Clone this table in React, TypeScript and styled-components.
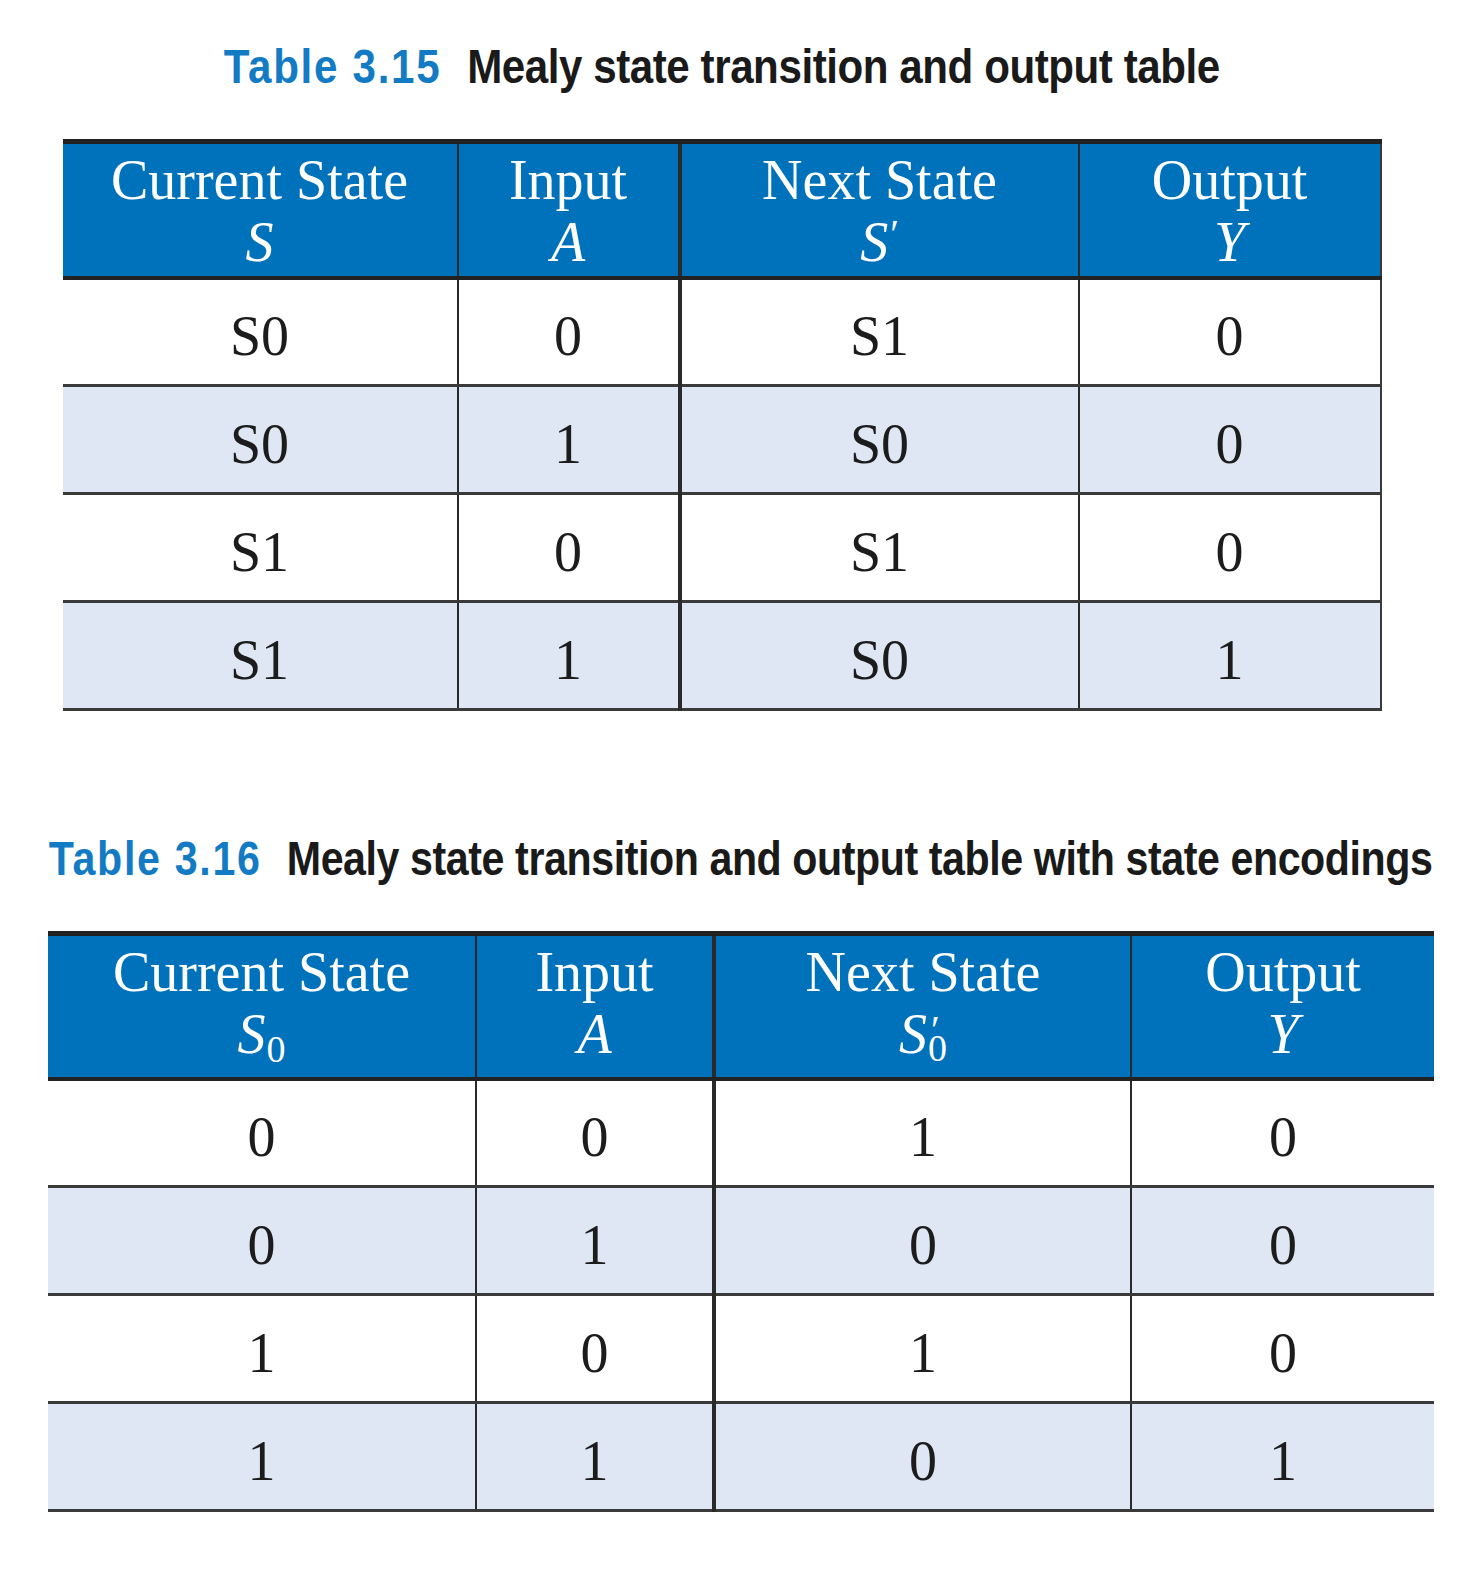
import React from 'react'
import styled, { createGlobalStyle } from 'styled-components'

const GlobalStyle = createGlobalStyle`
    html, body {
        margin: 0;
        padding: 0;
        background: #ffffff;
    }
`

interface TableSpec {
    number: string
    title: string
    offset: number
    squeeze: number
    cols: number[]
    headHeight: number
    rightBorder: boolean
    heads: { label: string; symbol: React.ReactNode }[]
    rows: string[][]
}

const Prime = () => <PrimeMark>′</PrimeMark>

const PrimeSub = () => (
    <Stack>
        <StackTop>′</StackTop>
        <StackBottom>0</StackBottom>
    </Stack>
)

// built inside render so the styled parts below are defined by then
const getTables = (): TableSpec[] => [
    {
        number: 'Table 3.15',
        title: 'Mealy state transition and output table',
        offset: 63,
        squeeze: 0.859,
        cols: [395, 222, 399, 302],
        headHeight: 136,
        rightBorder: true,
        heads: [
            { label: 'Current State', symbol: <Sym>S</Sym> },
            { label: 'Input', symbol: <Sym>A</Sym> },
            { label: 'Next State', symbol: <Sym>S<Prime /></Sym> },
            { label: 'Output', symbol: <Sym>Y</Sym> },
        ],
        rows: [
            ['S0', '0', 'S1', '0'],
            ['S0', '1', 'S0', '0'],
            ['S1', '0', 'S1', '0'],
            ['S1', '1', 'S0', '1'],
        ],
    },
    {
        number: 'Table 3.16',
        title: 'Mealy state transition and output table with state encodings',
        offset: 48,
        squeeze: 0.84,
        cols: [428, 238, 417, 303],
        headHeight: 145,
        rightBorder: false,
        heads: [
            { label: 'Current State', symbol: <Sym>S<Sub>0</Sub></Sym> },
            { label: 'Input', symbol: <Sym>A</Sym> },
            { label: 'Next State', symbol: <Sym>S<PrimeSub /></Sym> },
            { label: 'Output', symbol: <Sym>Y</Sym> },
        ],
        rows: [
            ['0', '0', '1', '0'],
            ['0', '1', '0', '0'],
            ['1', '0', '1', '0'],
            ['1', '1', '0', '1'],
        ],
    },
]

export default function App() {
    const tables = getTables()

    return (
        <>
            <GlobalStyle />
            <Page>
                {tables.map((t) => (
                    <Figure key={t.number} $offset={t.offset} $width={t.cols.reduce((a, b) => a + b, 0)}>
                        <Caption $squeeze={t.squeeze}>
                            <CaptionNumber>{t.number}</CaptionNumber>
                            <CaptionTitle>{t.title}</CaptionTitle>
                        </Caption>
                        <Table $rightBorder={t.rightBorder}>
                            <colgroup>
                                {t.cols.map((w, i) => (
                                    <col key={i} style={{ width: w }} />
                                ))}
                            </colgroup>
                            <thead>
                                <tr>
                                    {t.heads.map((h, i) => (
                                        <HeadCell key={h.label} $thick={i === 1} $height={t.headHeight}>
                                            <HeadLabel>{h.label}</HeadLabel>
                                            {h.symbol}
                                        </HeadCell>
                                    ))}
                                </tr>
                            </thead>
                            <tbody>
                                {t.rows.map((r, ri) => (
                                    <BodyRow key={ri} $shaded={ri % 2 === 1}>
                                        {r.map((v, ci) => (
                                            <BodyCell key={ci} $thick={ci === 1}>
                                                {v}
                                            </BodyCell>
                                        ))}
                                    </BodyRow>
                                ))}
                            </tbody>
                        </Table>
                    </Figure>
                ))}
            </Page>
        </>
    )
}

const Page = styled.div`
    display: flex;
    flex-direction: column;
    gap: 117px;
    padding: 36px 0 60px;
    width: 1462px;
    overflow: hidden;
`

const Figure = styled.section<{ $offset: number; $width: number }>`
    margin-left: ${(p) => p.$offset}px;
    width: ${(p) => p.$width}px;
    display: flex;
    flex-direction: column;
    align-items: center;
    gap: 43px;
`

const Caption = styled.h2<{ $squeeze: number }>`
    margin: 0;
    font-family: "Liberation Sans", Arial, sans-serif;
    font-weight: 700;
    font-size: 49px;
    line-height: 60px;
    letter-spacing: -0.5px;
    white-space: nowrap;
    display: flex;
    justify-content: center;
    gap: 30px;
    transform: scaleX(${(p) => p.$squeeze});
    transform-origin: center;
`

const CaptionNumber = styled.span`
    color: #137bc3;
    letter-spacing: 2px;
`

const CaptionTitle = styled.span`
    color: #1a1a1a;
`

const Table = styled.table<{ $rightBorder: boolean }>`
    width: 100%;
    border-collapse: collapse;
    table-layout: fixed;
    font-family: "Liberation Serif", "Times New Roman", serif;
    border-top: 5px solid #222222;
    border-bottom: 3px solid #3a3a3a;
    border-right: ${(p) => (p.$rightBorder ? '2px solid #3a3a3a' : 'none')};
`

const HeadCell = styled.th<{ $thick: boolean; $height: number }>`
    height: ${(p) => p.$height}px;
    background: #0072bc;
    color: #ffffff;
    font-weight: 400;
    font-size: 56px;
    line-height: 62px;
    text-align: center;
    vertical-align: top;
    padding: 5px 0 0;
    box-sizing: border-box;
    border-bottom: 4px solid #222222;
    border-right: ${(p) => (p.$thick ? '4px' : '2px')} solid #2a2a2a;

    &:last-child {
        border-right: none;
    }
`

const HeadLabel = styled.div`
    display: block;
`

const Sym = styled.div`
    font-style: italic;
    display: block;
`

const PrimeMark = styled.span`
    font-style: normal;
    font-size: 40px;
    line-height: 1;
    vertical-align: 14px;
    margin-left: 2px;
`

const Sub = styled.span`
    font-style: normal;
    font-size: 38px;
    line-height: 1;
    vertical-align: -9px;
    margin-left: 1px;
`

const Stack = styled.span`
    display: inline-grid;
    justify-items: start;
    vertical-align: 10px;
    font-style: normal;
    font-size: 38px;
    line-height: 18px;
    margin-left: 1px;
`

const StackTop = styled.span`
    font-size: 40px;
    margin-left: 3px;
`

const StackBottom = styled.span``

const BodyRow = styled.tr<{ $shaded: boolean }>`
    background: ${(p) => (p.$shaded ? '#dee7f3' : '#ffffff')};
    border-top: 3px solid #3a3a3a;

    &:first-child {
        border-top: none;
    }
`

const BodyCell = styled.td<{ $thick: boolean }>`
    height: 108px;
    padding: 8px 0 0;
    box-sizing: border-box;
    text-align: center;
    vertical-align: middle;
    font-size: 56px;
    line-height: 62px;
    color: #1c1c1c;
    border-right: ${(p) => (p.$thick ? '4px' : '2px')} solid #2a2a2a;

    &:last-child {
        border-right: none;
    }
`
